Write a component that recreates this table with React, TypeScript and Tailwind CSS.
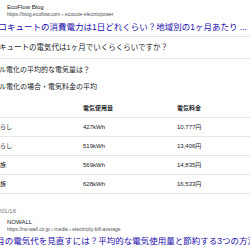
const ROWS = [
  { who: "一人暮らし", kwh: "427kWh", yen: "10,777円" },
  { who: "二人暮らし", kwh: "519kWh", yen: "13,406円" },
  { who: "３人家族", kwh: "569kWh", yen: "14,835円" },
  { who: "４人家族", kwh: "628kWh", yen: "16,533円" },
];

function Site({ name, url }: { name: string; url: string }) {
  return (
    <div className="pl-[7px]">
      <p className="whitespace-nowrap text-[6px] leading-[8px] text-[#202124]">{name}</p>
      <p className="whitespace-nowrap text-[5px] leading-[7px] text-[#4d5156]">{url}</p>
    </div>
  );
}

export default function App() {
  return (
    <div className="h-[250px] w-[250px] overflow-hidden bg-white font-['Liberation_Sans','Noto_Sans_CJK_JP',sans-serif] text-[#202124]">
      <div className="pt-[3px]">
        <Site name="EcoFlow Blog" url="https://blog.ecoflow.com › ecocute-electricpower" />
        <p className="-ml-[10px] mt-[3px] whitespace-nowrap text-[8.5px] leading-[12px] text-[#1a0dab]">
          エコキュートの消費電力は1日どれくらい？地域別の1ヶ月あたり ...
        </p>

        <div className="mt-[3px] flex h-[23px] items-center border-y border-[#e6e6e6]">
          <p className="-ml-[16px] whitespace-nowrap text-[7.5px] leading-[12px]">
            エコキュートの電気代は1ヶ月でいくらくらいですか？
          </p>
        </div>

        <p className="-ml-[15px] mt-[5px] whitespace-nowrap text-[7px] leading-[12px]">
          オール電化の平均的な電気量は？
        </p>
        <p className="-ml-[15px] mt-[5px] whitespace-nowrap text-[7px] leading-[12px]">
          オール電化の場合・電気料金の平均
        </p>

        <div className="-ml-[18px] mt-[6px] text-[6px]">
          <div className="grid h-[19px] grid-cols-[101px_94px_1fr] items-center border-b border-[#e6e6e6] font-bold">
            <span />
            <span>電気使用量</span>
            <span>電気料金</span>
          </div>
          {ROWS.map((r) => (
            <div
              key={r.who}
              className="grid h-[19px] grid-cols-[101px_94px_1fr] items-center border-b border-[#e6e6e6]"
            >
              <span className="whitespace-nowrap">{r.who}</span>
              <span>{r.kwh}</span>
              <span>{r.yen}</span>
            </div>
          ))}
        </div>

        <p className="-ml-[14px] mt-[13px] text-[6px] leading-[8px] text-[#70757a]">2023/01/16</p>

        <div className="mt-[3px]">
          <Site name="NOWALL" url="https://no-wall.co.jp › media › electricity-bill-average" />
          <p className="-ml-[17px] mt-[2px] whitespace-nowrap text-[8.5px] leading-[12px] text-[#1a0dab]">
            1ヶ月の電気代を見直すには？平均的な電気使用量と節約する3つの方法
          </p>
        </div>
      </div>
    </div>
  );
}
